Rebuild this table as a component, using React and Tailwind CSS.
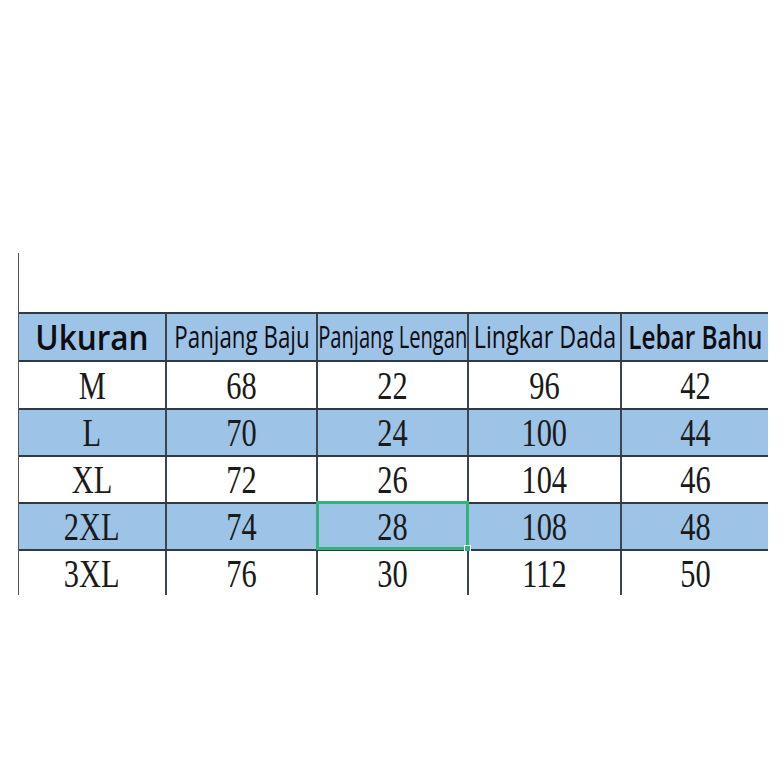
import React from "react";

const headers = [
  { label: "Ukuran", cls: "text-[35px] font-semibold scale-x-[0.9]" },
  { label: "Panjang Baju", cls: "text-[31px] scale-x-[0.72]" },
  { label: "Panjang Lengan", cls: "text-[31px] scale-x-[0.65]" },
  { label: "Lingkar Dada", cls: "text-[31px] scale-x-[0.75]" },
  { label: "Lebar Bahu", cls: "text-[32px] font-semibold scale-x-[0.76]" },
];

const rows = [
  { h: "h-[48px]", blue: false, cells: ["M", "68", "22", "96", "42"] },
  { h: "h-[47px]", blue: true, cells: ["L", "70", "24", "100", "44"] },
  { h: "h-[47px]", blue: false, cells: ["XL", "72", "26", "104", "46"] },
  { h: "h-[47px]", blue: true, cells: ["2XL", "74", "28", "108", "48"], selected: 2 },
  { h: "h-[46px]", blue: false, cells: ["3XL", "76", "30", "112", "50"] },
];

const grid = "grid grid-cols-[148px_151px_151px_153px_146px]";

export default function App() {
  return (
    <div className="w-[784px] h-[784px] bg-white overflow-hidden">
      <div className="pt-[253px] ml-[18px] w-[750px]">
        <div className="border-l border-[#555]">
          <div className="h-[59px]" />
          <div className={`${grid} h-[48px] bg-[#9dc3e6] border-t-2 border-[#2f3a46]`}>
            {headers.map((hd, i) => (
              <div
                key={hd.label}
                className={`flex items-center justify-center overflow-visible whitespace-nowrap pb-[1px] ${i < 4 ? "border-r-2 border-[#3c4650]" : ""}`}
              >
                <span
                  className={`inline-block leading-none text-[#0d0d12] font-['Open_Sans',sans-serif] ${hd.cls}`}
                >
                  {hd.label}
                </span>
              </div>
            ))}
          </div>
          {rows.map((r) => (
            <div
              key={r.cells[0]}
              className={`${grid} ${r.h} border-t-2 border-[#2f3a46] ${r.blue ? "bg-[#9dc3e6]" : "bg-white"}`}
            >
              {r.cells.map((c, i) => (
                <div
                  key={i}
                  className={`relative flex items-center justify-center ${i < 4 ? "border-r-2 border-[#3c4650]" : ""}`}
                >
                  <span className="inline-block leading-none text-[39px] scale-x-[0.78] text-[#1a1a1a] font-['Liberation_Serif',serif]">
                    {c}
                  </span>
                  {r.selected === i && (
                    <div className="absolute -left-[2px] -top-[3px] -right-[2px] -bottom-[1px] border-[3px] border-[#34b27c]">
                      <div className="absolute -right-[5px] -bottom-[5px] w-[7px] h-[7px] bg-[#34b27c] border border-white" />
                    </div>
                  )}
                </div>
              ))}
            </div>
          ))}
        </div>
      </div>
    </div>
  );
}
